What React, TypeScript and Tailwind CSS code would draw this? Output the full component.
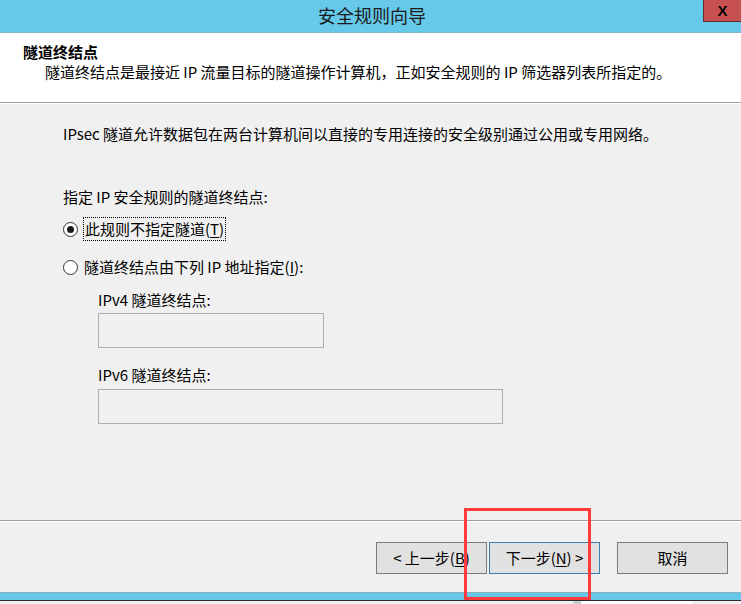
import React from "react";

function Radio({ checked }: { checked?: boolean }) {
  return (
    <span className="w-[15px] h-[15px] rounded-full border border-[#333333] bg-white flex items-center justify-center shrink-0">
      {checked ? <span className="w-[7px] h-[7px] rounded-full bg-[#1a1a1a]" /> : null}
    </span>
  );
}

function Button({
  children,
  primary,
}: {
  children: React.ReactNode;
  primary?: boolean;
}) {
  return (
    <button
      className={
        primary
          ? "w-[111px] h-[32px] bg-[#e1e1e1] border border-[#3c7fb1] text-[15px] leading-[20px] text-black flex items-center justify-center"
          : "w-[111px] h-[32px] bg-[#e1e1e1] border border-[#7a7a7a] text-[15px] leading-[20px] text-black flex items-center justify-center"
      }
    >
      {children}
    </button>
  );
}

export default function App() {
  return (
    <div className="relative w-[741px] h-[604px] overflow-hidden bg-[#f0f0f0] font-['Noto_Sans_CJK_SC','Noto_Sans',sans-serif] text-black">
      {/* title bar */}
      <div className="h-[33px] bg-[#66c9e9] border-b border-[#84b4c8] flex justify-center pt-[4px]">
        <span className="text-[18px] leading-[22px] text-[#1a1a1a] pl-[3px]">安全规则向导</span>
      </div>
      <div className="absolute top-0 right-0 w-[38px] h-[22px] bg-[#c75050] border-l border-b border-[#5e2e2e] flex items-center justify-center">
        <span className="font-['Liberation_Sans',sans-serif] font-bold text-[15px] leading-none text-black">X</span>
      </div>

      {/* header */}
      <div className="h-[70px] bg-white border-b border-[#a0a0a0] pt-[9px] pl-[23px]">
        <div className="text-[15px] leading-[20px] font-bold">隧道终结点</div>
        <div className="text-[15px] leading-[20px] pl-[22px]">
          隧道终结点是最接近 IP 流量目标的隧道操作计算机，正如安全规则的 IP 筛选器列表所指定的。
        </div>
      </div>

      {/* content */}
      <div className="h-[417px] border-t border-white pl-[63px] pt-[20px] text-[15px] leading-[20px]">
        <div>IPsec 隧道允许数据包在两台计算机间以直接的专用连接的安全级别通过公用或专用网络。</div>
        <div className="mt-[43px]">指定 IP 安全规则的隧道终结点:</div>
        <div className="mt-[10px] h-[24px] flex items-center gap-[5px]">
          <Radio checked />
          <span className="border border-dotted border-black h-[24px] px-[1px] flex items-center">
            此规则不指定隧道(<span className="underline underline-offset-2">T</span>)
          </span>
        </div>
        <div className="mt-[14px] h-[24px] flex items-center gap-[6px]">
          <Radio />
          <span>
            隧道终结点由下列 IP 地址指定(<span className="underline underline-offset-2">I</span>):
          </span>
        </div>
        <div className="pl-[35px]">
          <div className="mt-[11px]">IPv4 隧道终结点:</div>
          <div className="mt-[3px] w-[226px] h-[35px] border border-[#adadad] bg-[#f0f0f0]" />
          <div className="mt-[17px]">IPv6 隧道终结点:</div>
          <div className="mt-[4px] w-[405px] h-[35px] border border-[#adadad] bg-[#f0f0f0]" />
        </div>
      </div>

      {/* footer */}
      <div className="h-[72px] border-t border-[#a0a0a0]">
        <div className="border-t border-white h-full flex justify-end items-start pt-[20px] pr-[13px]">
          <div className="flex gap-[2px]">
            <Button>
              &lt; 上一步(<span className="underline underline-offset-2">B</span>)
            </Button>
            <Button primary>
              下一步(<span className="underline underline-offset-2">N</span>) &gt;
            </Button>
          </div>
          <div className="ml-[17px]">
            <Button>取消</Button>
          </div>
        </div>
      </div>

      {/* bottom window frame */}
      <div className="h-[8px] bg-[#66c9e9] border-t border-[#8ab0bf]" />
      <div className="h-[1px] bg-[#2b2b2b]" />
      <div className="h-[3px] flex">
        <div className="w-[573px]" />
        <div className="w-[8px] bg-[#c5cfd4]" />
        <div className="w-[111px] bg-white" />
      </div>

      {/* red annotation box */}
      <div className="absolute left-[464px] top-[508px] w-[127px] h-[92px] border-[3px] border-[#ff3b3b]" />
    </div>
  );
}
